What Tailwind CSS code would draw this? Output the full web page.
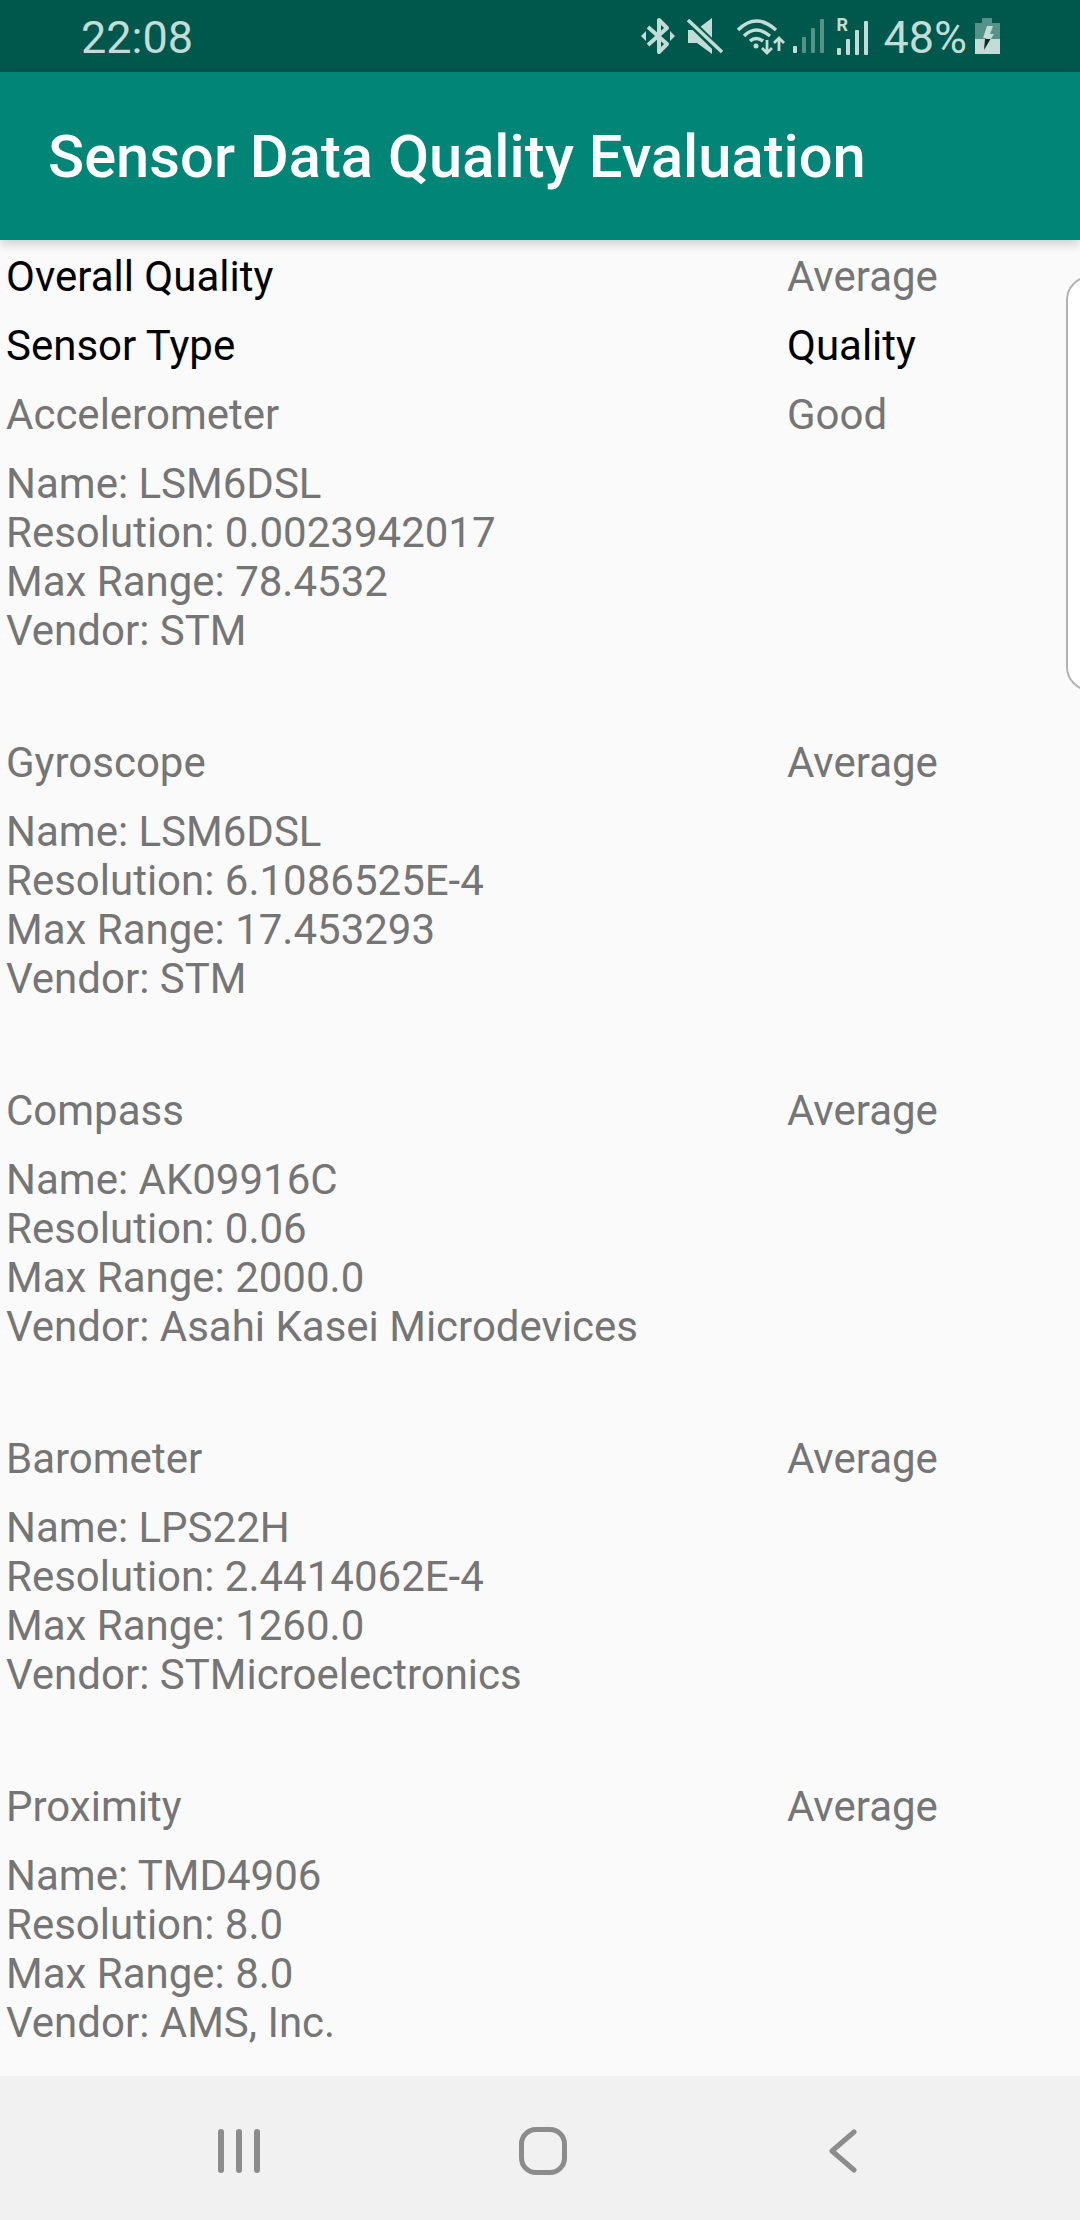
<!DOCTYPE html>
<html lang="en">
<head>
    <meta charset="UTF-8">
    <meta name="viewport" content="width=device-width, initial-scale=1.0">
    <title>Sensor Data Quality Evaluation</title>
    <script src="https://cdn.jsdelivr.net/npm/@tailwindcss/browser@4"></script>
</head>
<body class="m-0">
<div class="relative flex flex-col w-[1080px] h-[2220px] overflow-hidden bg-[#fafafa] font-['Roboto',sans-serif]">

    <!-- status bar -->
    <div class="flex items-center h-[72px] pl-[81px] bg-[#00574b] text-[#c2dcd7] text-[45px] leading-none shrink-0">
        <span class="pt-[2px]">22:08</span>
        <div class="flex items-center ml-auto mr-[80px] h-[72px]">
            <svg width="34" height="38" viewBox="0 0 34 38" fill="none" stroke="#c2dcd7" stroke-width="4" stroke-linejoin="round">
                <path d="M7 10 L26 27 L18 35 V3 L26 11 L7 28"/>
                <path d="M0 19 L5 14 V24 Z M34 19 L29 14 V24 Z" fill="#c2dcd7" stroke="none"/>
            </svg>
            <svg class="ml-[12px]" width="36" height="37" viewBox="0 0 36 37">
                <path d="M1 12 H9 L25 0 V36 L10 25 H1 Z" fill="#c2dcd7"/>
                <path d="M-2 -1 L36 36" stroke="#00574b" stroke-width="8"/>
                <path d="M1 2 L35 34" stroke="#c2dcd7" stroke-width="3.5"/>
            </svg>
            <svg class="ml-[13px]" width="50" height="38" viewBox="0 0 50 38" fill="none" stroke="#c2dcd7" stroke-width="3.5">
                <path d="M2 13 Q20 -5 40 13"/>
                <path d="M8 19 Q20 7 34 19"/>
                <path d="M14 24 Q20 19 27 24"/>
                <circle cx="20" cy="29" r="2.5" fill="#c2dcd7" stroke="none"/>
                <path d="M31 23 V36 M26 31 L31 36 L36 31 M43 34 V21 M38 26 L43 21 L48 26" stroke-width="2.8"/>
            </svg>
            <svg class="ml-[7px]" width="32" height="36" viewBox="0 0 32 36" fill="#c2dcd7">
                <rect x="0" y="28" width="4" height="7" rx="1"/>
                <rect x="9" y="19" width="4" height="16" rx="1" opacity=".45"/>
                <rect x="18" y="10" width="4" height="25" rx="1" opacity=".45"/>
                <rect x="27" y="1" width="4" height="34" rx="1" opacity=".45"/>
            </svg>
            <div class="relative ml-[10px] w-[34px] h-[40px]">
                <span class="absolute left-[1px] top-[0px] text-[18px] leading-[18px] font-bold">R</span>
                <svg width="34" height="40" viewBox="0 0 34 40" fill="#c2dcd7">
                    <rect x="2" y="32" width="4" height="7" rx="1"/>
                    <rect x="11" y="23" width="4" height="16" rx="1"/>
                    <rect x="20" y="14" width="4" height="25" rx="1"/>
                    <rect x="29" y="5" width="4" height="34" rx="1"/>
                </svg>
            </div>
            <span class="ml-[14px] pt-[2px]">48%</span>
            <svg class="ml-[8px]" width="25" height="36" viewBox="0 0 25 36">
                <path d="M7 0 H17 V5 H25 V21 H0 V5 H7 Z" fill="#c2dcd7" opacity=".45"/>
                <rect x="0" y="21" width="25" height="15" fill="#c2dcd7"/>
                <path d="M12 8 H18 L15 16 H19 L9 32 L11 20 H8 Z" fill="#c2dcd7"/>
                <path d="M10 21 H15.5 L9 32 Z" fill="#0c2a26"/>
            </svg>
        </div>
    </div>

    <!-- toolbar -->
    <div class="relative z-10 flex items-center h-[168px] pl-[48px] pt-[3px] bg-[#008577] text-white text-[59.7px] font-medium leading-none shrink-0 shadow-[0_4px_10px_rgba(0,0,0,0.18)]">
        Sensor Data Quality Evaluation
    </div>

    <!-- sensor list -->
    <div class="flex-1 min-h-0 pt-[12px] text-[42px] leading-[49px] text-[#757575]">
        <div class="grid grid-cols-[787px_1fr] mb-[20px]">
            <div class="pl-[6px] text-black">Overall Quality</div>
            <div>Average</div>
        </div>
        <div class="grid grid-cols-[787px_1fr] mb-[20px] text-black">
            <div class="pl-[6px]">Sensor Type</div>
            <div>Quality</div>
        </div>

        <div class="grid grid-cols-[787px_1fr] mb-[83px]">
            <div class="pl-[6px]">
                <div class="mb-[20px]">Accelerometer</div>
                <div>Name: LSM6DSL</div>
                <div>Resolution: 0.0023942017</div>
                <div>Max Range: 78.4532</div>
                <div>Vendor: STM</div>
            </div>
            <div>Good</div>
        </div>

        <div class="grid grid-cols-[787px_1fr] mb-[83px]">
            <div class="pl-[6px]">
                <div class="mb-[20px]">Gyroscope</div>
                <div>Name: LSM6DSL</div>
                <div>Resolution: 6.1086525E-4</div>
                <div>Max Range: 17.453293</div>
                <div>Vendor: STM</div>
            </div>
            <div>Average</div>
        </div>

        <div class="grid grid-cols-[787px_1fr] mb-[83px]">
            <div class="pl-[6px]">
                <div class="mb-[20px]">Compass</div>
                <div>Name: AK09916C</div>
                <div>Resolution: 0.06</div>
                <div>Max Range: 2000.0</div>
                <div>Vendor: Asahi Kasei Microdevices</div>
            </div>
            <div>Average</div>
        </div>

        <div class="grid grid-cols-[787px_1fr] mb-[83px]">
            <div class="pl-[6px]">
                <div class="mb-[20px]">Barometer</div>
                <div>Name: LPS22H</div>
                <div>Resolution: 2.4414062E-4</div>
                <div>Max Range: 1260.0</div>
                <div>Vendor: STMicroelectronics</div>
            </div>
            <div>Average</div>
        </div>

        <div class="grid grid-cols-[787px_1fr]">
            <div class="pl-[6px]">
                <div class="mb-[20px]">Proximity</div>
                <div>Name: TMD4906</div>
                <div>Resolution: 8.0</div>
                <div>Max Range: 8.0</div>
                <div>Vendor: AMS, Inc.</div>
            </div>
            <div>Average</div>
        </div>
    </div>

    <!-- nav bar -->
    <div class="grid grid-cols-3 items-center justify-items-center h-[144px] px-[90px] pt-[6px] bg-[#f1f1f1] shrink-0">
        <svg width="44" height="44" viewBox="0 0 44 44" fill="#8c8c8c">
            <rect x="0" y="0" width="6" height="44" rx="3"/>
            <rect x="18" y="0" width="6" height="44" rx="3"/>
            <rect x="36" y="0" width="6" height="44" rx="3"/>
        </svg>
        <div class="ml-[5px] w-[48px] h-[48px] border-[5px] border-[#8c8c8c] rounded-[17px]"></div>
        <svg class="ml-[6px]" width="28" height="44" viewBox="0 0 28 44" fill="none" stroke="#8c8c8c" stroke-width="5" stroke-linecap="round" stroke-linejoin="round">
            <path d="M25 3 L3 22 L25 41"/>
        </svg>
    </div>

    <!-- edge panel handle -->
    <div class="absolute top-[276px] left-[1066px] w-[40px] h-[415px] bg-white border-2 border-[#b3b3b3] rounded-l-[24px]"></div>
</div>
</body>
</html>
